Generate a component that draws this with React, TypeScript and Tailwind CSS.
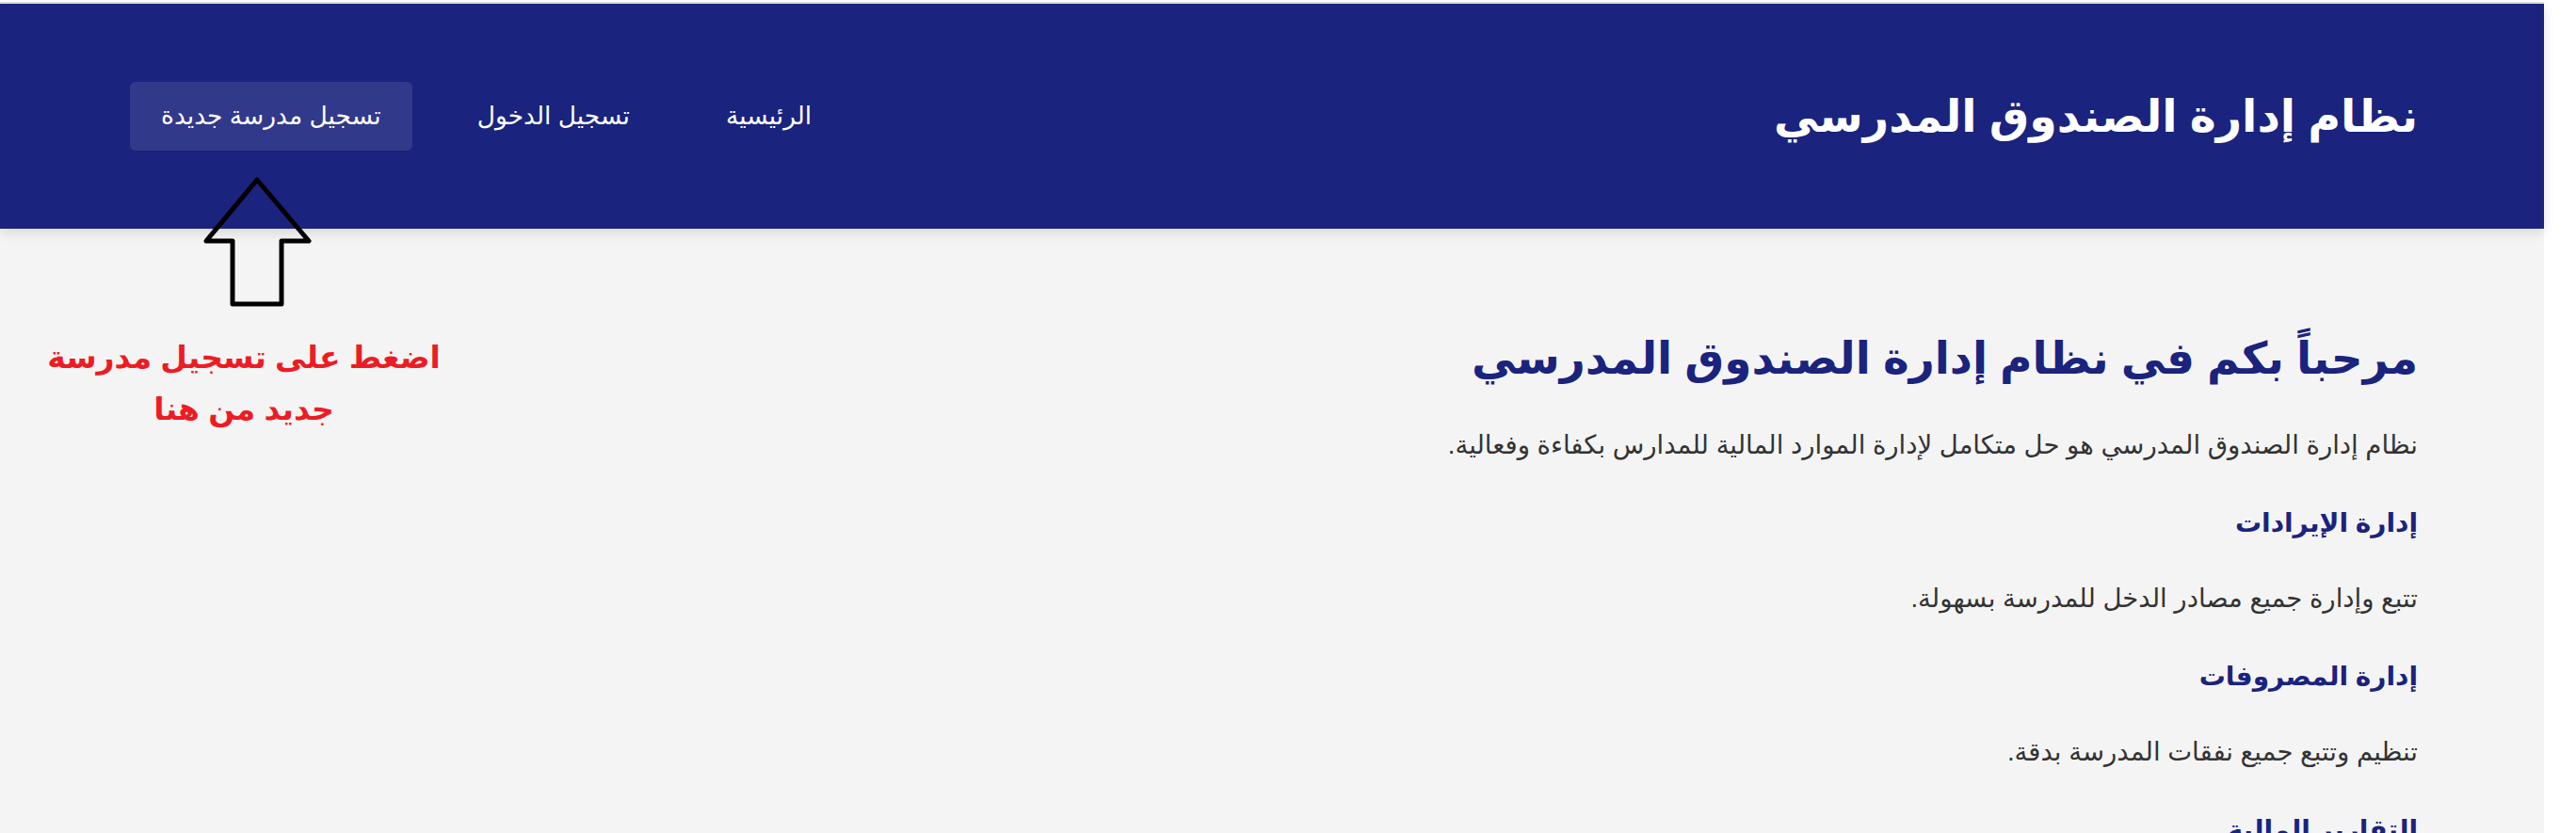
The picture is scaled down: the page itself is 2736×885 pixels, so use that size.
import React from "react";

const NAV = ["الرئيسية", "تسجيل الدخول", "تسجيل مدرسة جديدة"];

const SECTIONS = [
  { title: "إدارة الإيرادات", text: "تتبع وإدارة جميع مصادر الدخل للمدرسة بسهولة." },
  { title: "إدارة المصروفات", text: "تنظيم وتتبع جميع نفقات المدرسة بدقة." },
  { title: "التقارير المالية", text: "إعداد تقارير مالية شاملة ودقيقة عن وضع الصندوق." },
];

function UpArrow() {
  return (
    <svg width="130" height="150" viewBox="0 0 130 150" className="absolute left-[210px] top-[182px] z-20">
      <polygon
        points="63,9 118,74 89,74 89,141 37,141 37,74 9,74"
        fill="none"
        stroke="#000"
        strokeWidth="5"
        strokeLinejoin="round"
      />
    </svg>
  );
}

export default function App() {
  return (
    <div className="relative flex h-[885px] overflow-hidden bg-white pt-[2px] font-['Liberation_Sans','DejaVu_Sans',sans-serif]">
      <div dir="rtl" className="flex-1 border-t-2 border-[#e2e2e2] bg-[#f4f4f4]">
        <header className="relative z-10 flex h-[239px] items-center justify-between bg-[#1a237e] pr-[134px] pl-[138px] shadow-[0_4px_12px_rgba(0,0,0,0.12)]">
          <h1 className="text-[47.5px] font-bold leading-[90px] text-white">نظام إدارة الصندوق المدرسي</h1>
          <nav className="flex items-center gap-[36px]">
            {NAV.map((item, i) => (
              <a
                key={item}
                href="#"
                className={
                  i === NAV.length - 1
                    ? "rounded-[6px] bg-white/10 px-[33px] py-[14px] text-[26.5px] leading-[45px] text-white"
                    : "px-[33px] py-[14px] text-[26.5px] leading-[45px] text-white"
                }
              >
                {item}
              </a>
            ))}
          </nav>
        </header>

        <main className="px-[134px] pt-[93px] text-right">
          <h2 className="mb-[24px] text-[47px] font-bold leading-[90px] text-[#1a237e]">
            مرحباً بكم في نظام إدارة الصندوق المدرسي
          </h2>
          <p className="text-[27.5px] leading-[45px] text-[#333]">
            نظام إدارة الصندوق المدرسي هو حل متكامل لإدارة الموارد المالية للمدارس بكفاءة وفعالية.
          </p>
          {SECTIONS.map((s) => (
            <section key={s.title}>
              <h3 className="mt-[34px] mb-[31px] text-[28px] font-bold leading-[53px] text-[#1a237e]">{s.title}</h3>
              <p className="text-[27.5px] leading-[45px] text-[#333]">{s.text}</p>
            </section>
          ))}
        </main>
      </div>
      <div className="w-[34px] shrink-0 bg-white" />

      <UpArrow />
      <div
        dir="rtl"
        className="absolute left-[19px] top-[352px] z-20 w-[480px] whitespace-nowrap text-center text-[33px] font-bold leading-[55px] text-[#ed1c24]"
      >
        اضغط على تسجيل مدرسة
        <br />
        جديد من هنا
      </div>
    </div>
  );
}
